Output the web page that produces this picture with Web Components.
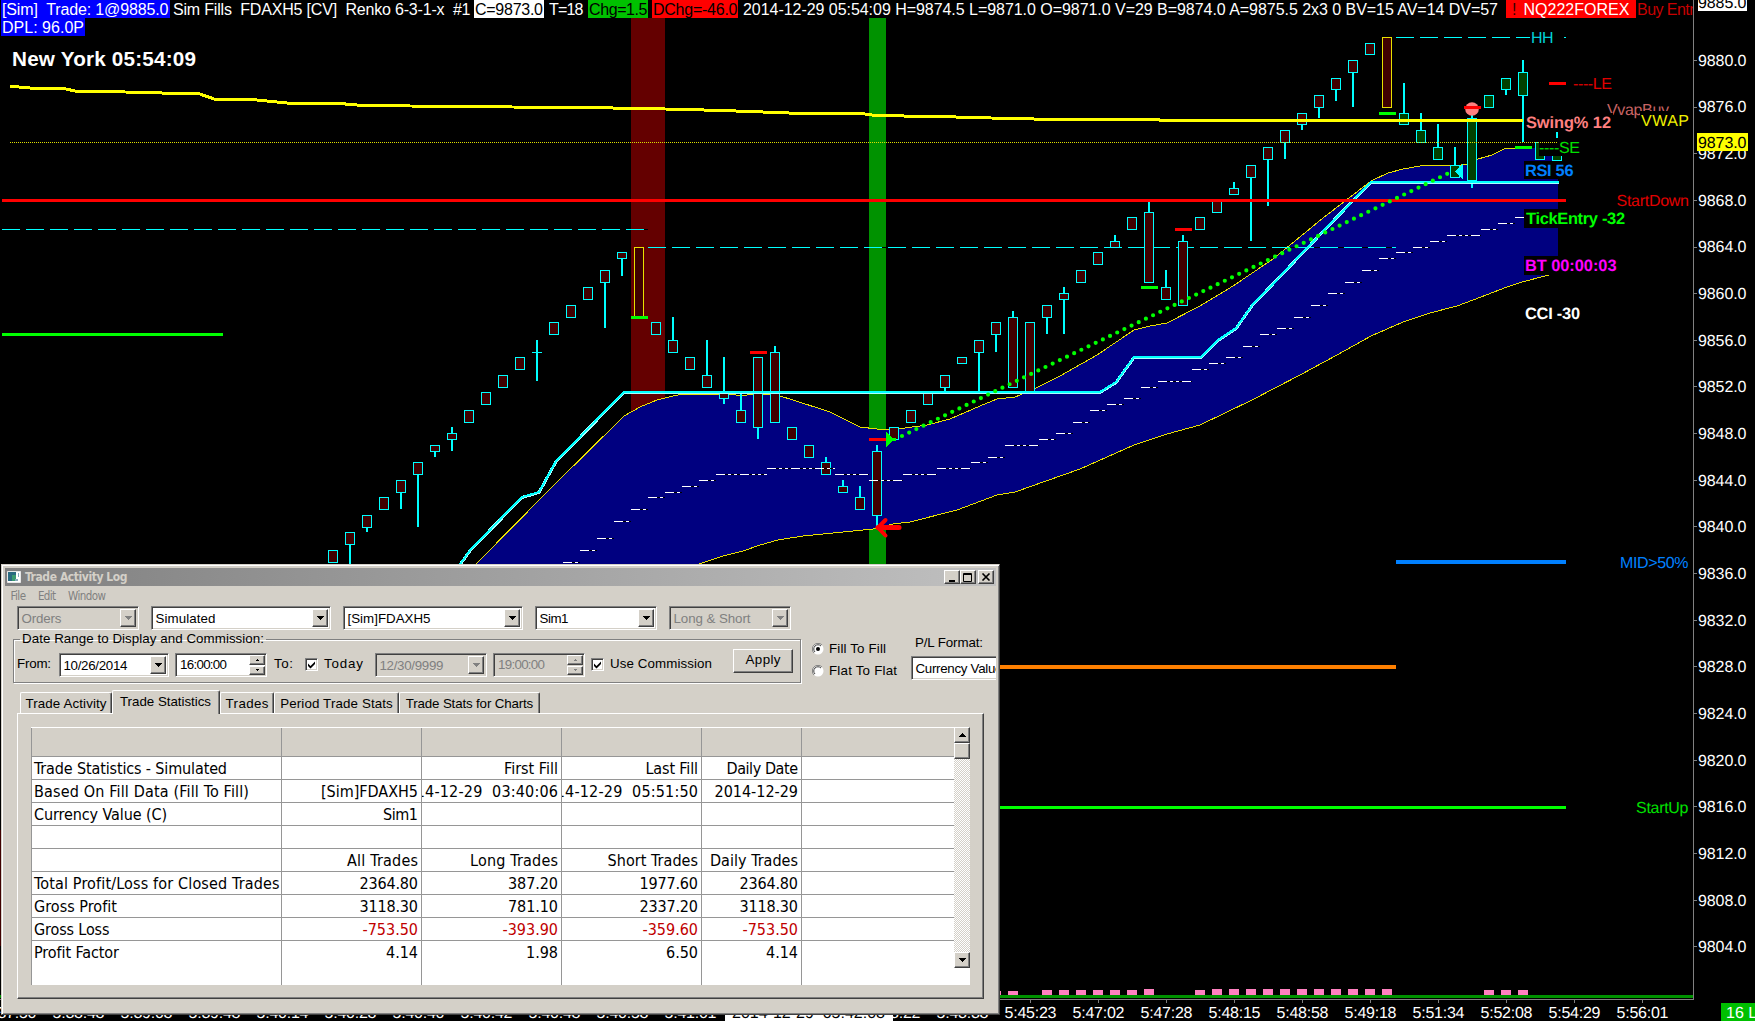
<!DOCTYPE html>
<html lang="en">
<head>
<meta charset="utf-8">
<title>FDAXH5 Renko</title>
<style>
html,body{margin:0;padding:0;background:#000;overflow:hidden}
</style>
</head>
<body>
<trading-desk></trading-desk>
<script>
const FACE = '"Liberation Sans",Arial,sans-serif';
const TAHOMA = '"DejaVu Sans Condensed","DejaVu Sans",Tahoma,sans-serif';

class Base extends HTMLElement {
  constructor() {
    super();
    this.attachShadow({ mode: 'open' });
    this.shadowRoot.innerHTML = `<style>:host{box-sizing:border-box}*{box-sizing:border-box}</style>` + this.markup();
  }
  markup() { return '<slot></slot>'; }
}

/* ---------- chart canvas ---------- */
class PriceChart extends Base {
  markup() {
    const C = [[550,563],[532,545,532,570],[515,528,515,532],[497,510],[480,493,480,509],[462,475,462,527],[445,452,445,457],[433,440,427,451],
      [410,423],[392,405],[375,388],[357,370],[352,353,340,381],[322,335],[305,318],[287,300],[270,283,270,328],[252,259,252,276],[247,317,247,317,'y'],
      [322,335],[340,353,317,353],[357,370],[375,388,340,388],[392,399,357,404],[410,423,392,423],[357,428,357,439],[352,423,346,423],[427,440],[445,458],
      [462,475,457,475],[486,493,480,493],[497,510,486,510],[451,516,445,527],[427,440],[410,423],[392,405],[375,388,375,391],[357,364],[340,353,340,392],
      [322,335,322,352],[317,388,311,388],[322,393],[305,318,305,334],[293,300,287,334],[270,283],[252,265],[241,248,235,248],[217,230],[212,283,201,283],
      [287,300,270,300],[241,306,235,306],[217,230],[200,213],[188,195,182,195],[165,178,165,241],[147,160,147,206],[130,143,130,159],[113,125,113,130],
      [95,108,95,118],[78,90,78,101],[60,73,60,107],[43,55],[37,108,37,108,'y'],[113,125,83,125],[130,143,113,143],[147,160,124,160],[165,178,147,178],
      [118,181,114,188],[95,108],[78,90,78,95],[72,96,60,142],[142,160],[150,161,132,161]];
    let candles = '';
    C.forEach(([t, b, wt, wb, y], i) => {
      const x = 333 + 17 * i, s = y ? '#e8e000' : '#0ff', f = i > 62 ? '#004000' : '#400000';
      if (wt !== undefined && !y) candles += `<rect x="${x - 1}" y="${wt}" width="2" height="${wb - wt}" fill="#0ff"/>`;
      if (b - t < 2) candles += `<rect x="${x - 5}" y="${t}" width="10" height="1" fill="#0ff"/>`;
      else candles += `<rect x="${x - 4.5}" y="${t + .5}" width="9" height="${b - t - 1}" fill="${f}" stroke="${s}"/>`;
    });
    const mark = (x, y, c) => `<rect x="${x}" y="${y}" width="17" height="3" fill="${c}"/>`;
    const M = [[563,562],[580,550],[597,538],[614,521],[631,509],[648,497],[665,492],[682,486],[699,480],[716,474,51],[767,468,68],[835,474,34],[869,480,34],
      [903,474,34],[937,468,34],[971,462],[988,457],[1005,445,34],[1039,439],[1056,433],[1073,422],[1090,410],[1107,404],[1124,398],[1141,387],[1158,381,34],
      [1192,369],[1209,363],[1226,357],[1243,346],[1260,334],[1277,328],[1294,317],[1311,305],[1328,293],[1345,282],[1362,270],[1379,258],[1396,252],[1413,247],
      [1430,241],[1447,235,34],[1481,229],[1498,223],[1515,217,9]];
    const mid = M.map(([x, y, w = 17]) => `<path d="M${x} ${y + .5}h${w}" stroke="#000"/><path d="M${x} ${y + .5}h${w}" stroke="#fff" stroke-dasharray="9 3 3 3 3 3"/>`).join('');
    const up = '476,564 550,489 624,416 640,407 657,400 673,396 683,394 730,394 742,396 753,394 768,394 780,396 793,400 830,412 860,427 877,429 898,429 927,425 950,419 980,406 997,399 1015,397 1032,390 1060,376 1097,355 1134,330 1150,326 1167,323 1200,306 1233,286 1273,259 1323,218 1371,181 1388,173 1403,169 1420,166 1438,165 1455,166 1467,164 1478,159 1492,155 1506,148 1532,148';
    const low = '1549,275 1522,282 1507,287 1473,300 1457,306 1430,313 1403,322 1371,336 1337,355 1300,375 1252,400 1200,425 1167,434 1134,445 1080,469 1015,492 997,495 957,510 910,522 893,524 873,529 853,531 803,536 778,540 760,545 743,551 723,556 699,564';
    const T = (x, y, s, fill, w, o = '') => `<text x="${x}" y="${y}" fill="${fill}" ${w ? `textLength="${w}"` : ''} ${o}>${s}</text>`;
    const box = (x, y, w, h, f = '#000') => `<rect x="${x}" y="${y}" width="${w}" height="${h}" fill="${f}"/>`;
    let scale = '';
    for (let p = 9880; p >= 9804; p -= 4) {
      const y = 60.4 + (9880 - p) * 11.664;
      scale += box(1694, Math.floor(y), 3, 1, '#808080') + T(1698, Math.round(y + 5.4), p + '.0', '#fff', 48.5);
    }
    const times = ['5:37:50','5:38:48','5:39:08','5:39:48','5:40:14','5:40:28','5:40:40','5:40:42','5:40:48','5:40:58','5:41:01','','','5:43:22','5:43:38',
      '5:45:23','5:47:02','5:47:28','5:48:15','5:48:58','5:49:18','5:51:34','5:52:08','5:54:29','5:56:01'];
    const axis = times.map((t, i) => t ? box(10 + 68 * i, 1000, 1, 3, '#808080') + T(10.5 + 68 * i, 1018, t, '#fff', 52, 'text-anchor="middle"') : '').join('');
    const P = [[1000,991,1],[1008,991],[1042,990],[1059,990],[1076,990],[1093,990],[1110,990],[1127,990],[1144,989],[1195,990]];
    for (let x = 1212; x <= 1382; x += 17) P.push([x, 989]);
    P.push([1484,990],[1501,990],[1518,990]);
    const pink = P.map(([x, y, w = 10]) => box(x, y, w, 995 - y, '#ff80c0')).join('');
    return `<style>
:host{display:block;width:1755px;height:1021px}
svg{display:block;font:16px ${FACE}} .b{font-weight:bold;font-size:16.400px}
</style>
<svg width="1755" height="1021" viewBox="0 0 1755 1021" fill="none" text-rendering="geometricPrecision"><g shape-rendering="crispEdges">
${box(631,18,34,546,'#640000')}${box(869,18,17,546,'#009200')}${box(0,830,1,116,'#400000')}${box(0,995,1,3,'#009200')}
<polygon points="${up} 1558,150 1558,275 ${low} 476,564" fill="#000080"/>
<polyline points="${up}" stroke="#e8e000"/><polyline points="${low}" stroke="#e8e000"/>
<path d="M2 229.5H648M648 247.5H1396" stroke="#000"/>
<path d="M2 229.5H648" stroke="#0ff" stroke-dasharray="18 6"/><path d="M648 247.5H1396" stroke="#0ff" stroke-dasharray="18 6"/>
<path d="M1396 37.5H1566" stroke="#0ff" stroke-dasharray="18 6"/>
${candles}${mid}
<polyline points="460,564.5 471,549.5 522,497.5 539,492.5 556,461.5 624,392.5 1100,392.5 1116,382.5 1134,357.5 1201,357.5 1218,340.5 1236,328.5 1253,304.5 1271,286 1303,252.5 1337,217 1371,182.5 1559,182.5" stroke="#a8ffff" stroke-width="3"/>
<polyline points="460,564 471,549 522,497 539,492 556,461 624,392 1100,392 1116,382 1134,357 1201,357 1218,340 1236,328 1253,304 1271,286 1303,252 1337,217 1371,182 1559,182" stroke="#0ff" stroke-width="2"/>
<path d="M2 200.5H1566" stroke="#f00" stroke-width="3"/>
<path d="M2 334.5H223" stroke="#0f0" stroke-width="3"/>
<path d="M1000 807.5H1566" stroke="#0f0" stroke-width="3"/>
<path d="M1396 562H1566" stroke="#0080ff" stroke-width="4"/>
<path d="M1000 667H1396" stroke="#ff8000" stroke-width="4"/>
<polyline points="10,86.5 19,87 36,88.5 64,88.5 76,91.3 104,91.5 155,92.7 174,93.5 199,93.7 215,99.3 240,99.5 257,100 291,103.4 342,103.7 360,105.3 410,106 512,107 597,107.7 665,109 716,110.3 750,111.5 802,113.5 865,114 875,115.5 921,116.3 971,117.3 1006,118.5 1056,119.4 1159,119.5 1160,120.5 1523,120.5" stroke="#ff0" stroke-width="3"/>
${mark(631,316,'#0f0')}${mark(1141,286,'#0f0')}${mark(1379,112,'#0f0')}${mark(1515,146,'#0f0')}
${mark(750,351,'#f00')}${mark(869,438,'#f00')}${mark(1175,228,'#f00')}${mark(1549,82,'#f00')}
<polygon points="886,432 886,447 893,440.500 896,440.500 896,438 893,438" fill="#0f0"/>
<polygon points="1463,164 1463,179 1455,171.500" fill="#0ff"/>
</g>
<path d="M902 436L1452 171.500" stroke="#0f0" stroke-width="4.200" stroke-linecap="round" stroke-dasharray="0 7.960"/>
<path d="M878 527.500H899" stroke="#f00" stroke-width="5" stroke-linecap="round"/><path d="M885.500 520L878 527.500L885.500 535.500" stroke="#f00" stroke-width="4" stroke-linecap="round"/>
<circle cx="1472" cy="109" r="6.800" fill="#ff8080"/>${mark(1464,106,'#f00')}
${T(1607,115,'VvapBuy','#c86464',62)}
${box(1525,113,88,19)}${box(1640,111,50,19)}${box(1539,138,42,18)}${box(1524,161,50,18)}${box(1524,209,102,19)}${box(1524,256,94,19)}${box(1530,28,28,19)}
<path d="M10 142.500H1557" stroke="#e0e000" stroke-dasharray="1 1" shape-rendering="crispEdges"/>
${T(1531,43,'HH','#00d0d8',22.5)}
${T(1573,88.5,'----LE','#e00000',39)}
${T(1641,126,'VWAP','#f0f000',48)}
<g class="b">${T(1526,128,'Swing% 12','#ff8080',85)}${T(1525,176,'RSI 56','#0080ff',48.500)}${T(1526,224,'TickEntry -32','#0f0',99)}${T(1525,271,'BT 00:00:03','#f0f',91.5)}${T(1525,319,'CCI -30','#fff',55)}</g>
${T(1539,153,'----SE','#00e000',41)}
${T(1616.5,206,'StartDown','#e00000',72.500)}
${T(1620,568,'MID&gt;50%','#0080ff',68.500)}
${T(1636,813,'StartUp','#00e000',52.500)}
${box(1000,995,693,3,'#009200')}${pink}
${box(1693,0,1,1000,'#808080')}${box(0,999,1694,1,'#808080')}
${scale}
${box(1697,133,51,18,'#ff0')}${T(1698,148,'9873.0','#000',48.5)}
${box(1698,0,49,11,'#fff')}${T(1698,8,'9885.0','#000',48.5)}
${axis}
${box(725,1003,168,18,'#fff')}${T(732,1018,'2014-12-29  05:42:08','#000',153,'style="white-space:pre"')}
${box(1721,1003,34,18,'#00c000')}${T(1726,1018,'16 L','#fff')}
</svg>`;
  }
}

/* ---------- text stretched to a set width by tracking ---------- */
class FitText extends HTMLElement {
  constructor() {
    super();
    this.attachShadow({ mode: 'open' });
    this.shadowRoot.innerHTML = '<style>:host{display:inline-block;white-space:pre;flex:none}</style><slot></slot>';
  }
  connectedCallback() {
    const w = parseFloat(this.getAttribute('w'));
    if (!w) return;
    const n = this.textContent.length, nat = this.getBoundingClientRect().width;
    this.style.letterSpacing = ((w - nat) / Math.max(1, n - 1)).toFixed(3) + 'px';
    this.style.width = w + 'px';
  }
}

/* ---------- status lines at the top ---------- */
class StatusLine extends Base {
  markup() {
    const S = [[1,169,1,166.5,'[Sim]  Trade: 1@9885.0','#00f','#fff'],[2,300,1,297.5,'Sim Fills  FDAXH5 [CV]  Renko 6-3-1-x  #1','','#fff'],
      [2,70,1,68,'C=9873.0','#fff','#000'],[5,35,0,34.5,'T=18','','#fff'],[4,60,1,58.5,'Chg=1.5','#00c000','#000'],[4,86,1,84.5,'DChg=-46.0','#f00','#000'],
      [5,756,0,755,'2014-12-29 05:54:09 H=9874.5 L=9871.0 O=9871.0 V=29 B=9874.0 A=9875.5 2x3 0 BV=15 AV=14 DV=57','','#fff']];
    return `<style>
:host{display:flex;flex-direction:column;align-items:flex-start;font:16px/19px ${FACE};color:#fff}
.row{display:flex;width:1693px;height:18px;overflow:hidden}
.row>span{flex:none;overflow:hidden;height:18px;white-space:pre}
.alert{background:#f00;margin-left:7px;width:130px;display:flex;padding-left:6px;gap:7px}
.alert i{font-style:normal;color:#300}
.dpl{background:#00f;margin-left:1px;padding-left:1px;width:84px;height:18px;overflow:hidden}
.clock{font:bold 20.700px/24px ${FACE};margin:11px 0 0 12px}
</style><div class="row">${S.map(([m, w, p, t, s, bg, c]) => `<span style="margin-left:${m}px;width:${w}px;padding-left:${p}px;color:${c};background:${bg || 'none'}"><fit-text w="${t}">${s}</fit-text></span>`).join('')}<span class="alert"><i>!</i><fit-text w="106">NQ222FOREX</fit-text></span><span style="margin-left:1px;color:#c80000"><fit-text w="65">Buy Entry</fit-text></span></div>
<div class="dpl"><fit-text w="82">DPL: 96.0P</fit-text></div>
<div class="clock"><fit-text w="184">New York 05:54:09</fit-text></div>`;
  }
}

/* ---------- classic form controls ---------- */
const SUNK = 'border:1px solid;border-color:#808080 #fff #fff #808080;box-shadow:inset 1px 1px #404040,inset -1px -1px #d4d0c8;';
const RAISED = 'background:#d4d0c8;border:1px solid;border-color:#fff #404040 #404040 #fff;box-shadow:inset -1px -1px #808080;';
const tri = (up, c = '#000', w = 7) => `<svg width="${w}" height="${(w + 1) / 2}" shape-rendering="crispEdges"><path d="${up ? `M0 ${(w + 1) / 2}L${w / 2} 0L${w} ${(w + 1) / 2}Z` : `M0 0H${w}L${w / 2} ${(w + 1) / 2}Z`}" fill="${c}"/></svg>`;

class ComboBox extends Base {
  markup() {
    const off = this.hasAttribute('off');
    return `<style>
:host{display:flex;flex:none;height:24px;padding:2px;align-items:stretch;background:#fff;color:#000;${SUNK}}
:host([off]){background:#d4d0c8;color:#808080}
.t{flex:1;padding-left:1.500px;line-height:19px;white-space:nowrap;overflow:hidden}
.b{width:16px;display:flex;align-items:center;justify-content:center;${RAISED}}
</style><div class="t"><slot></slot></div><div class="b">${tri(false, off ? '#808080' : '#000')}</div>`;
  }
}
class SpinBox extends Base {
  markup() {
    const c = this.hasAttribute('off') ? '#808080' : '#000';
    return `<style>
:host{display:flex;flex:none;height:24px;width:92px;padding:1px;background:#fff;color:#000;${SUNK}}
:host([off]){background:#d4d0c8;color:#808080}
.t{flex:1;padding-left:3px;line-height:20px;white-space:nowrap}
.s{width:16px;display:flex;flex-direction:column;gap:1px}
.s div{flex:1;display:flex;align-items:center;justify-content:center;${RAISED}}
</style><div class="t"><slot></slot></div><div class="s"><div>${tri(true, c, 3)}</div><div>${tri(false, c, 3)}</div></div>`;
  }
}
class CheckBox extends Base {
  markup() {
    return `<style>
:host{display:flex;flex:none;align-items:center;gap:6px}
.c{width:13px;height:13px;background:#fff;${SUNK}display:flex;align-items:center;justify-content:center;margin-bottom:2px}
.l{padding-bottom:2px}
</style><div class="c"><svg width="9" height="9"><path d="M1 3.500V6L3.500 8.500L8 4V1.500L3.500 6Z" fill="#000"/></svg></div><div class="l"><slot></slot></div>`;
  }
}
class RadioButton extends Base {
  markup() {
    return `<style>:host{display:flex;align-items:center;gap:5px;height:22px}</style>
<svg width="12" height="12" fill="none"><circle cx="6" cy="6" r="5.500" fill="#fff"/><path d="M2 10A5.500 5.500 0 0 1 10 2" stroke="#808080"/><path d="M3 9A4.200 4.200 0 0 1 9 3" stroke="#404040"/>${this.hasAttribute('on') ? '<circle cx="6" cy="6" r="2" fill="#000"/>' : ''}</svg><slot></slot>`;
  }
}
class TabItem extends Base {
  markup() {
    return `<style>
:host{display:flex;flex:none;height:21px;padding-top:2px;line-height:18px;border:1px solid #fff;border-right-color:#404040;border-bottom:0;box-shadow:inset -1px 0 #808080;border-radius:2px 2px 0 0;justify-content:center;background:#d4d0c8}
:host([on]){height:24px;margin-bottom:-1px;padding-top:2px;padding-right:1px}
</style><slot></slot>`;
  }
}

class StatsGrid extends Base {
  markup() {
    const R = [
      [['Trade Statistics - Simulated',193],0,['First Fill',54],['Last Fill',52.5],['Daily Date',71.5]],
      [['Based On Fill Data (Fill To Fill)',215],['[Sim]FDAXH5',97],['2014-12-29  03:40:06',161],['2014-12-29  05:51:50',161],['2014-12-29',83.5]],
      [['Currency Value (C)',133],['Sim1',35],0,0,0],
      [0,0,0,0,0],
      [0,['All Trades',71],['Long Trades',88],['Short Trades',90.5],['Daily Trades',88]],
      [['Total Profit/Loss for Closed Trades',245.5],['2364.80',58.5],['387.20',50],['1977.60',58.5],['2364.80',58.5]],
      [['Gross Profit',83],['3118.30',58.5],['781.10',50],['2337.20',58.5],['3118.30',58.5]],
      [['Gross Loss',75.5],['-753.50',55.5],['-393.90',55.5],['-359.60',55.5],['-753.50',55.5]],
      [['Profit Factor',85],['4.14',32],['1.98',32],['6.50',32],['4.14',32]]];
    const cells = r => r.map(c => `<div class="c">${c ? `<fit-text w="${c[1]}"${/^-/.test(c[0]) ? ' style="color:#c00000"' : ''}>${c[0]}</fit-text>` : ''}</div>`).join('') + '<div class="c"></div>';
    return `<style>
:host{display:flex;width:939px;height:258px;background:#fff;font:16px/24px ${TAHOMA};color:#000}
.g{width:923px}
.r{display:grid;grid-template-columns:250px 140px 140px 140px 100px 153px;grid-template-rows:100%;height:23px;border-bottom:1px solid #969696}
.r:first-child{height:30px;background:#d4d0c8;border-top:1px solid #fff}
.r:last-child{height:44px;border-bottom:0}
.c{border-left:1px solid #969696;overflow:hidden;display:flex;justify-content:flex-end;padding-right:3px}
.c:first-child{justify-content:flex-start;padding:0 0 0 2px}
.s{width:16px;height:241px;display:flex;flex-direction:column;background:repeating-conic-gradient(#fff 0 25%,#d4d0c8 0 50%) 0 0/2px 2px}
.s div{height:16px;display:flex;align-items:center;justify-content:center;${RAISED}}
.s div:last-child{margin-top:auto}
</style><div class="g"><div class="r">${'<div class="c"></div>'.repeat(6)}</div>${R.map(r => `<div class="r">${cells(r)}</div>`).join('')}</div>
<div class="s"><div>${tri(true)}</div><div></div><div>${tri(false)}</div></div>`;
  }
}

class ActivityWindow extends Base {
  markup() {
    return `<style>
:host{display:block;width:999px;height:451px;background:#d4d0c8;border:1px solid;border-color:#d4d0c8 #404040 #404040 #d4d0c8;box-shadow:inset 1px 1px #fff,inset -1px -1px #808080;font:13.330px/16px ${FACE};color:#000;padding:3px 3px 0;overflow:hidden}
.title{height:18px;background:linear-gradient(90deg,#808080,#c0c0c0);display:flex;align-items:center;padding:0 2px;gap:3px;font:bold 12px/16px ${TAHOMA};color:#d4d0c8}
.title .sp{flex:1}
.wb{width:16px;height:14px;display:flex;align-items:center;justify-content:center;${RAISED}}
.wb.x{margin-left:2px}
.btns{display:flex}
.menu{display:flex;gap:12px;padding-left:5.500px;height:20px;font:11.500px/21px ${TAHOMA};color:#808080}
.combos{display:flex;gap:12px;padding-left:12px}
.mid{display:flex;height:62px;padding-left:8px}
fieldset{margin:0;padding:0;flex:none;width:788px;height:52px;border:1px solid #808080;box-shadow:1px 1px #fff,inset 1px 1px #fff;margin-top:1px;display:block;min-width:0}
legend{padding:0 2px;margin-left:6px;height:16px}
.row{display:flex;align-items:center;padding-left:3px;height:24px;margin-top:6px}
.row>fit-text{padding-bottom:2px}
.apply{width:60px;height:24px;display:flex;justify-content:center;line-height:19px;${RAISED}margin:-8px 0 0 21px}
.radios{flex:none;width:110px;padding:8px 0 0 11px}
.fmt{flex:none;padding-top:5px;line-height:16px;width:85px;overflow:hidden}
.fmt div{padding-left:4px;height:21px}
.fmt combo-box{width:150px}
.tabs{display:flex;align-items:flex-end;height:21px;padding-left:15px;margin-top:0}
.tabs tab-item{position:relative}
.panel{margin-left:12px;width:967px;height:286px;border:1px solid;border-color:#fff #404040 #404040 #fff;box-shadow:inset -1px -1px #808080;padding:13px 0 0 13px}
</style>
<div class="title"><svg width="15" height="12"><path d="M.500 .500h13v11h-13z" fill="#fff" stroke="#e8e8e8"/><path d="M1 1h8v9h-8z" fill="#2a6a80"/><path d="M5 4h4v6h-4z" fill="#3c9a70"/><path d="M11 2h1v4h-1zM8 8h3v2h-3z" fill="#8ab"/></svg><fit-text w="102.500">Trade Activity Log</fit-text><span class="sp"></span>
<div class="btns"><div class="wb"><svg width="10" height="9"><path d="M2 8h6" stroke="#000" stroke-width="2"/></svg></div><div class="wb"><svg width="10" height="9"><path d="M.500 .500h8v8h-8zM0 1.500h9" fill="none" stroke="#000"/></svg></div><div class="wb x"><svg width="10" height="8"><path d="M1.500 .500L8.500 7.500M8.500 .500L1.500 7.500" stroke="#000" stroke-width="1.600"/></svg></div></div></div>
<div class="menu"><fit-text w="15.500">File</fit-text><fit-text w="18">Edit</fit-text><fit-text w="38">Window</fit-text></div>
<div class="combos"><combo-box off style="width:122px"><fit-text w="40">Orders</fit-text></combo-box><combo-box style="width:180px"><fit-text w="60">Simulated</fit-text></combo-box><combo-box style="width:180px"><fit-text w="83">[Sim]FDAXH5</fit-text></combo-box><combo-box style="width:122px"><fit-text w="29">Sim1</fit-text></combo-box><combo-box off style="width:122px"><fit-text w="77">Long &amp; Short</fit-text></combo-box></div>
<div class="mid"><fieldset><legend><fit-text w="242">Date Range to Display and Commission:</fit-text></legend>
<div class="row"><fit-text w="34">From:</fit-text><combo-box style="width:110px;margin-left:8px"><fit-text w="64">10/26/2014</fit-text></combo-box><spin-box style="margin-left:6px"><fit-text w="47">16:00:00</fit-text></spin-box><fit-text w="19" style="margin-left:7px">To:</fit-text><check-box style="margin-left:12px"><fit-text w="39">Today</fit-text></check-box><combo-box off style="width:112px;margin-left:12px"><fit-text w="64">12/30/9999</fit-text></combo-box><spin-box off style="margin-left:6px"><fit-text w="47">19:00:00</fit-text></spin-box><check-box style="margin-left:6px"><fit-text w="102">Use Commission</fit-text></check-box><div class="apply"><fit-text w="35">Apply</fit-text></div></div></fieldset>
<div class="radios"><radio-button on><fit-text w="57">Fill To Fill</fit-text></radio-button><radio-button><fit-text w="68">Flat To Flat</fit-text></radio-button></div>
<div class="fmt"><div><fit-text w="68">P/L Format:</fit-text></div><combo-box><fit-text w="87">Currency Value</fit-text></combo-box></div></div>
<div class="tabs"><tab-item style="width:92px"><fit-text w="81">Trade Activity</fit-text></tab-item><tab-item on style="width:108px"><fit-text w="91">Trade Statistics</fit-text></tab-item><tab-item style="width:54px"><fit-text w="43">Trades</fit-text></tab-item><tab-item style="width:125px"><fit-text w="112.500">Period Trade Stats</fit-text></tab-item><tab-item style="width:141px"><fit-text w="127.500">Trade Stats for Charts</fit-text></tab-item></div>
<div class="panel"><stats-grid></stats-grid></div>`;
  }
}

class TradingDesk extends Base {
  markup() {
    return `<style>
:host{display:grid;position:relative;width:1755px;height:1021px;overflow:hidden;background:#000}
price-chart,status-line{grid-area:1/1}
activity-window{position:absolute;left:1px;top:564px}
</style><price-chart></price-chart><status-line></status-line><activity-window></activity-window>`;
  }
}

customElements.define('trading-desk', TradingDesk);
customElements.define('price-chart', PriceChart);
customElements.define('status-line', StatusLine);
customElements.define('activity-window', ActivityWindow);
for (const [n, c] of [['stats-grid', StatsGrid], ['tab-item', TabItem], ['combo-box', ComboBox], ['spin-box', SpinBox], ['check-box', CheckBox], ['radio-button', RadioButton]]) customElements.define(n, c);
customElements.define('fit-text', FitText);
</script>
</body>
</html>
